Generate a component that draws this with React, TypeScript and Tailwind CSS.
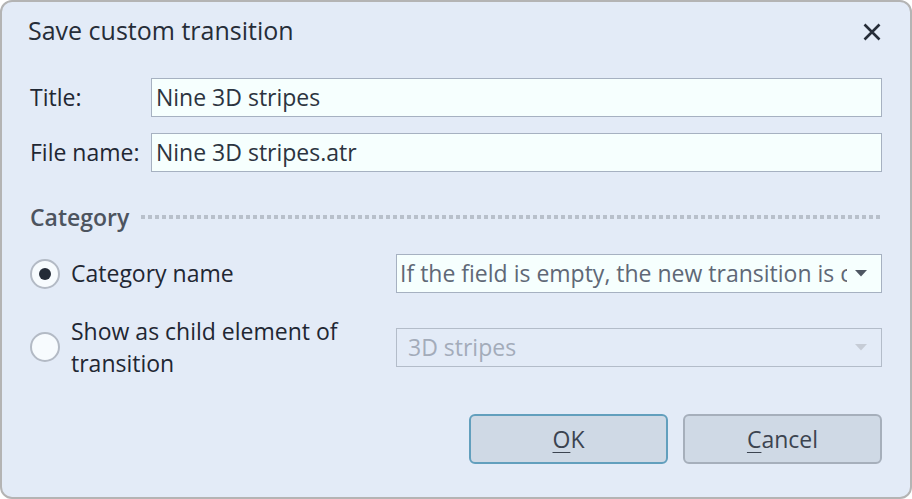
import React from "react";

const font = { fontFamily: '"Open Sans", "Noto Sans", sans-serif' };

function Caret({ color }: { color: string }) {
  return (
    <svg width="12" height="7" viewBox="0 0 12 7">
      <path d="M0 0H12L6 6.5Z" fill={color} />
    </svg>
  );
}

export default function App() {
  return (
    <div className="w-[912px] h-[499px] bg-white" style={font}>
      <div className="w-full h-full box-border border-2 border-[#b4b4b4] rounded-[12px] bg-[#e3ebf7] flex flex-col text-[#1f2733]">
        <div className="h-[58px] flex items-center justify-between pl-[26px] pr-[29px]">
          <div className="text-[25px] text-[#262d38]">Save custom transition</div>
          <svg width="18" height="18" viewBox="0 0 18 18" className="mt-[2px]">
            <path d="M1.5 1.5L16.5 16.5M16.5 1.5L1.5 16.5" stroke="#262d38" strokeWidth="2.6" />
          </svg>
        </div>
        <div className="flex flex-col pl-[28px] pr-[28px] mt-[18px] gap-[16px]">
          <div className="flex items-center">
            <div className="w-[121px] text-[23px]">Title:</div>
            <div className="flex-1 h-[39px] border border-[#a6b1c1] bg-[#f6fffe] flex items-center px-[4px] text-[23px] text-[#2c3440]">
              Nine 3D stripes
            </div>
          </div>
          <div className="flex items-center">
            <div className="w-[121px] text-[23px] whitespace-nowrap">File name:</div>
            <div className="flex-1 h-[39px] border border-[#a6b1c1] bg-[#f6fffe] flex items-center px-[4px] text-[23px] text-[#2c3440]">
              Nine 3D stripes.atr
            </div>
          </div>
        </div>
        <div className="flex items-center pl-[28px] pr-[28px] mt-[30px] h-[30px]">
          <div className="text-[23px] font-semibold text-[#4d545f]">Category</div>
          <div className="flex-1 ml-[12px] h-[4px] bg-[repeating-linear-gradient(90deg,#b8c0cb_0px,#b8c0cb_4px,transparent_4px,transparent_7px)]" />
        </div>
        <div className="flex items-center pl-[28px] pr-[28px] mt-[22px]">
          <div className="w-[366px] flex items-center">
            <div className="w-[30px] h-[30px] rounded-full border-2 border-[#b3bac5] bg-[#f7fbfe] flex items-center justify-center">
              <div className="w-[12px] h-[12px] rounded-full bg-[#242b37]" />
            </div>
            <div className="ml-[11px] text-[23px]">Category name</div>
          </div>
          <div className="flex-1 min-w-0 h-[39px] border border-[#a6b1c1] bg-[#f6fffe] flex items-center pl-[3px] pr-[14px] text-[23px] text-[#5f6876] overflow-hidden">
            <div className="flex-1 min-w-0 whitespace-nowrap overflow-hidden">If the field is empty, the new transition is c</div>
            <div className="ml-[8px]"><Caret color="#4e5662" /></div>
          </div>
        </div>
        <div className="flex items-center pl-[28px] pr-[28px] mt-[22px]">
          <div className="w-[366px] flex items-center">
            <div className="w-[30px] h-[30px] rounded-full border-2 border-[#b3bac5] bg-[#f7fbfe]" />
            <div className="ml-[11px] text-[23px] leading-[32px]">
              Show as child element of
              <br />
              transition
            </div>
          </div>
          <div className="flex-1 h-[39px] border border-[#b3bcc9] flex items-center pl-[11px] pr-[14px] text-[23px] text-[#a3acba]">
            <div className="flex-1">3D stripes</div>
            <Caret color="#c6ccd6" />
          </div>
        </div>
        <div className="flex justify-end gap-[15px] pr-[28px] mt-[35px]">
          <div className="w-[199px] h-[50px] rounded-[6px] border-2 border-[#629fbd] bg-[#cfd9e5] flex items-center justify-center text-[23px] text-[#3c4450]">
            <span><span className="underline underline-offset-[4px] decoration-1">O</span>K</span>
          </div>
          <div className="w-[199px] h-[50px] rounded-[6px] border-2 border-[#a6afbb] bg-[#cfd9e5] flex items-center justify-center text-[23px] text-[#3c4450]">
            <span><span className="underline underline-offset-[4px] decoration-1">C</span>ancel</span>
          </div>
        </div>
      </div>
    </div>
  );
}
